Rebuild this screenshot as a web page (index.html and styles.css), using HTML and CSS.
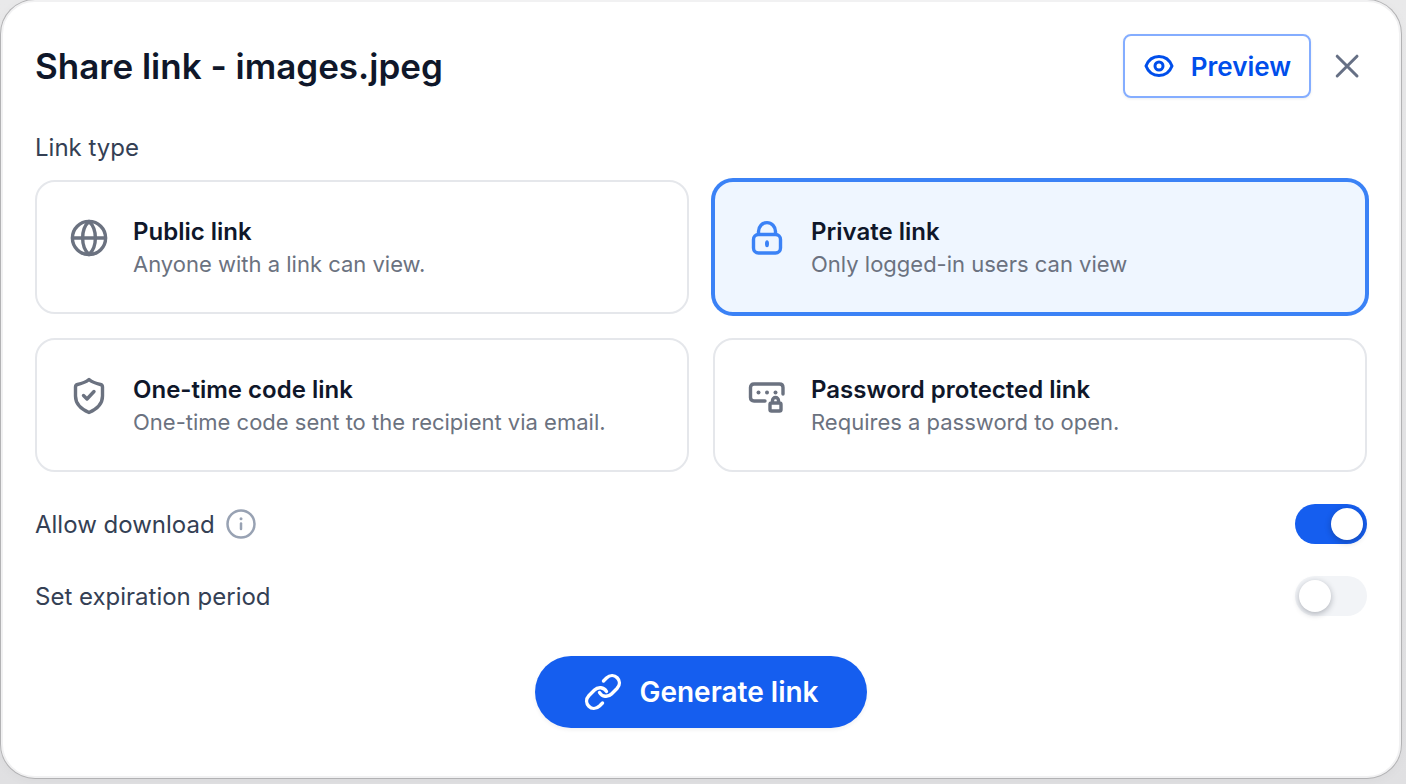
FILE: index.html
```html
<!DOCTYPE html>
<html lang="en">
<head>
<meta charset="utf-8">
<meta name="viewport" content="width=device-width, initial-scale=1">
<title>Share link</title>
<link rel="stylesheet" href="styles.css">
</head>
<body>
<main class="dialog" role="dialog" aria-labelledby="dialog-title">
  <header class="header">
    <h1 class="title" id="dialog-title">Share link - images.jpeg</h1>
    <div class="header-actions">
      <button class="preview" type="button">
        <svg class="icon-md" viewBox="0 0 32 32" aria-hidden="true"><path d="M3 16C5.500 9.500 10.500 6.500 16 6.500S26.500 9.500 29 16C26.500 22.500 21.500 25.500 16 25.500S5.500 22.500 3 16Z"/><circle cx="16" cy="16" r="4"/></svg>
        Preview
      </button>
      <button class="close" type="button" aria-label="Close">
        <svg class="icon-lg" viewBox="0 0 40 40" aria-hidden="true"><path d="M10.200 10.200 30 30M30 10.200 10.200 30"/></svg>
      </button>
    </div>
  </header>

  <form class="form">
    <fieldset class="types">
      <legend class="legend">Link type</legend>
      <div class="grid">
        <label class="card">
          <input class="card-input" type="radio" name="type" value="public">
          <svg class="card-icon icon-lg" viewBox="0 0 40 40" aria-hidden="true"><circle cx="20" cy="20" r="16.600"/><path d="M3.500 20H36.500M20 3.500C11.500 11 11.500 29 20 36.500M20 3.500C28.500 11 28.500 29 20 36.500"/></svg>
          <span class="card-text"><span class="card-title">Public link</span><span class="card-desc">Anyone with a link can view.</span></span>
        </label>
        <label class="card">
          <input class="card-input" type="radio" name="type" value="private" checked>
          <svg class="card-icon icon-lg" viewBox="0 0 40 40" aria-hidden="true"><rect x="6.500" y="16.500" width="27" height="18.500" rx="5"/><path d="M11.500 16V13.500A8.500 8.900 0 0 1 28.500 13.500V16"/><ellipse class="filled" cx="20" cy="25.800" rx="2" ry="3.500"/></svg>
          <span class="card-text"><span class="card-title">Private link</span><span class="card-desc">Only logged-in users can view</span></span>
        </label>
        <label class="card">
          <input class="card-input" type="radio" name="type" value="code">
          <svg class="card-icon icon-lg" viewBox="0 0 40 40" aria-hidden="true"><path d="M20 3.500C17 6 12 7.700 8.500 8.500Q6.500 9 6.500 11V20C6.500 28 13 33.500 20 36.500C27 33.500 33.500 28 33.500 20V11Q33.500 9 31.500 8.500C28 7.700 23 6 20 3.500Z"/><path d="M14.500 19.500 18 23 25 15.500"/></svg>
          <span class="card-text"><span class="card-title">One-time code link</span><span class="card-desc">One-time code sent to the recipient via email.</span></span>
        </label>
        <label class="card">
          <input class="card-input" type="radio" name="type" value="password">
          <svg class="card-icon icon-lg" viewBox="0 0 40 40" aria-hidden="true"><path d="M18 25H7Q3.500 25 3.500 21.500V11.500Q3.500 8 7 8H32.500Q36 8 36 11.500V18"/><path d="M23 28.500Q23 27 24.500 27H32.500Q34 27 34 28.500V33.500Q34 35 32.500 35H24.500Q23 35 23 33.500ZM25.500 27V24.500A3 3 0 0 1 31.500 24.500V27"/><g class="filled"><circle cx="11.500" cy="16.500" r="2"/><circle cx="20" cy="16.500" r="2"/><circle cx="28.500" cy="16.500" r="2"/></g></svg>
          <span class="card-text"><span class="card-title">Password protected link</span><span class="card-desc">Requires a password to open.</span></span>
        </label>
      </div>
    </fieldset>

    <div class="settings">
      <div class="setting">
        <label class="setting-label" for="download">Allow download</label>
        <button class="info" type="button" aria-label="About downloads">
          <svg class="icon-md" viewBox="0 0 32 32" aria-hidden="true"><circle cx="16" cy="16" r="13.500"/><path d="M16 15.500V21"/><circle class="filled" cx="16" cy="10.800" r="1.500"/></svg>
        </button>
        <input class="switch" id="download" type="checkbox" role="switch" checked>
      </div>
      <div class="setting">
        <label class="setting-label" for="expiration">Set expiration period</label>
        <input class="switch" id="expiration" type="checkbox" role="switch">
      </div>
    </div>

    <button class="generate" type="button">
      <svg class="icon-lg" viewBox="0 0 40 40" aria-hidden="true"><path d="M16.500 20.500C19 25 25 25.500 28.500 22L34 16.500C41 9 31 -1 23.500 6L20.500 9"/><path d="M23.500 19.500C21 15 15 14.500 11.500 18L6 23.500C-1 31 9 41 16.500 34L19.500 31"/></svg>
      Generate link
    </button>
  </form>
</main>
</body>
</html>
```
FILE: styles.css
```css
* {
  box-sizing: border-box;
}

body {
  margin: 0;
  background: linear-gradient(#e9e9ea, #e0e0e2);
  color: #0f172a;
  font-family: Inter, "Liberation Sans", sans-serif;
}

button {
  font: inherit;
  cursor: pointer;
}

svg {
  flex: none;
  display: block;
  fill: none;
  stroke: currentColor;
  stroke-width: 3;
  stroke-linecap: round;
  stroke-linejoin: round;
}

.filled {
  fill: currentColor;
  stroke: none;
}

.icon-md {
  width: 32px;
  height: 32px;
}

.icon-lg {
  width: 40px;
  height: 40px;
}

.dialog {
  margin: 0 5px 6px 1px;
  padding: 32px 32px 48px;
  border: 2px solid #f1f1f2;
  border-radius: 34px;
  background: #fff;
  box-shadow: 0 0 0 1px #b2b2b4, 0 2px 12px rgb(0 0 0 / 4%);
}

.header {
  display: flex;
  align-items: center;
  justify-content: space-between;
  gap: 16px;
  margin-bottom: 32px;
}

.title {
  margin: 0;
  font-size: 35px;
  font-weight: 600;
  line-height: 48px;
}

.header-actions {
  display: flex;
  align-items: center;
  gap: 16px;
}

.preview {
  display: flex;
  align-items: center;
  gap: 16px;
  height: 64px;
  padding: 0 18px;
  border: 2px solid #84adff;
  border-radius: 8px;
  background: #fff;
  box-shadow: 0 1px 3px rgb(16 24 40 / 8%);
  color: #004eeb;
  font-size: 26px;
  font-weight: 600;
}

.close,
.info {
  padding: 0;
  border: 0;
  background: none;
  color: #667085;
}

.types {
  min-width: 0;
  margin: 0 0 32px;
  padding: 0;
  border: 0;
}

.legend {
  margin-bottom: 14px;
  padding: 0;
  color: #344054;
  font-size: 24px;
  line-height: 36px;
}

.grid {
  display: grid;
  grid-template-columns: 1fr 1fr;
  gap: 24px;
}

.card {
  display: flex;
  align-items: flex-start;
  gap: 24px;
  padding: 32px;
  border: 2px solid #e5e7eb;
  border-radius: 20px;
  cursor: pointer;
}

.card:has(:checked) {
  border-color: #3b82f6;
  background: #eff6ff;
  box-shadow: 0 0 0 2px #3b82f6;
}

.card-input {
  position: absolute;
  opacity: 0;
}

.card-icon {
  margin-top: 4px;
  color: #6b7280;
  stroke-width: 3.4;
}

.card-input:checked + .card-icon {
  color: #3b82f6;
}

.card-text {
  display: flex;
  flex-direction: column;
}

.card-title {
  font-size: 24px;
  font-weight: 600;
  line-height: 35px;
}

.card-desc {
  color: #6b7280;
  font-size: 22px;
  line-height: 31px;
}

.settings {
  display: flex;
  flex-direction: column;
  gap: 32px;
  margin-bottom: 40px;
}

.setting {
  display: flex;
  align-items: center;
  gap: 10px;
  height: 40px;
}

.setting-label {
  color: #344054;
  font-size: 24px;
}

.info {
  color: #98a2b3;
}

.info svg {
  stroke-width: 2.5;
}

.switch {
  appearance: none;
  display: flex;
  width: 72px;
  height: 40px;
  margin: 0 0 0 auto;
  padding: 4px;
  border-radius: 20px;
  background: #f2f4f7;
  cursor: pointer;
}

.switch::before {
  content: "";
  width: 32px;
  height: 32px;
  border-radius: 50%;
  background: #fff;
  box-shadow: 0 2px 6px rgb(16 24 40 / 30%);
}

.switch:checked {
  justify-content: flex-end;
  background: #155eef;
}

.generate {
  display: flex;
  align-items: center;
  gap: 16px;
  height: 72px;
  margin: 0 auto;
  padding: 0 48px;
  border: 0;
  border-radius: 36px;
  background: #155eef;
  box-shadow: 0 2px 4px rgb(16 24 40 / 6%);
  color: #fff;
  font-size: 28px;
  font-weight: 600;
}

.generate svg {
  stroke-width: 3.4;
}
```
